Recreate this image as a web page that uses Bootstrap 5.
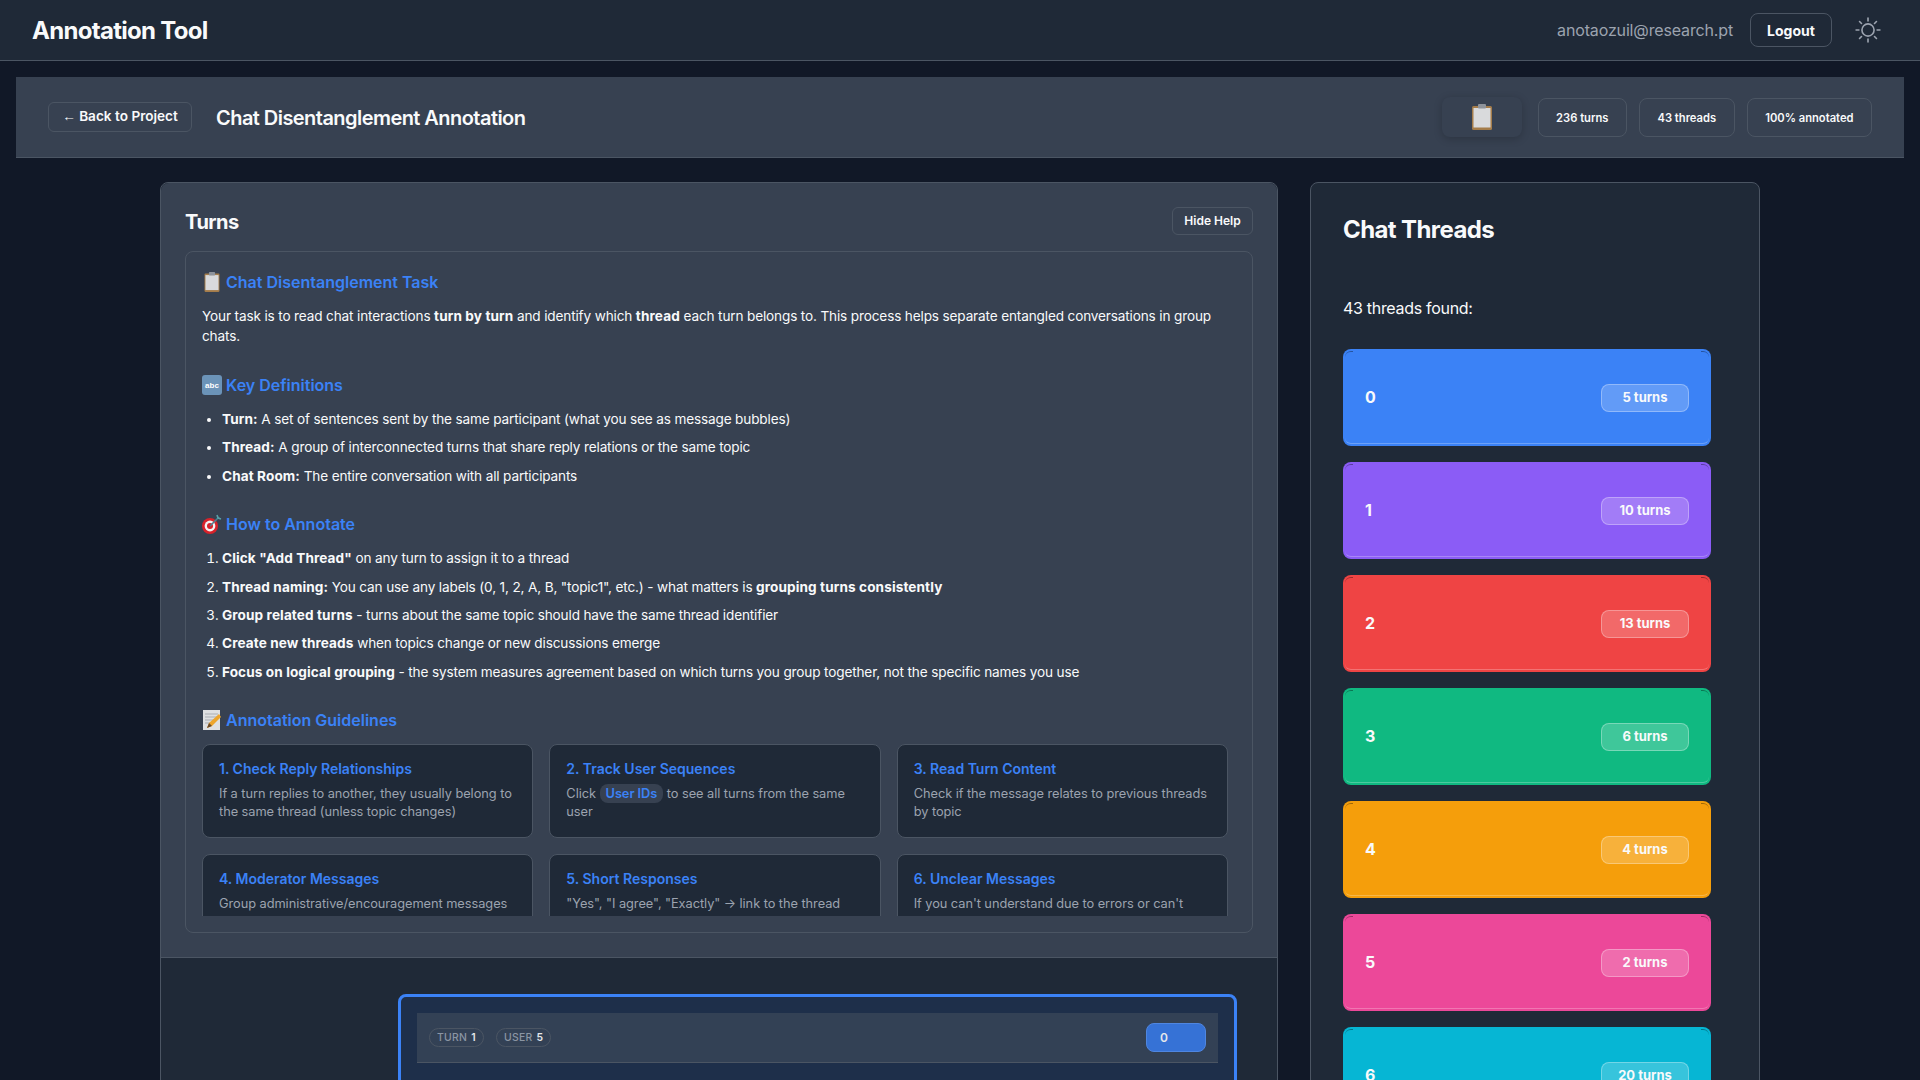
<!DOCTYPE html>
<html lang="en">
<head>
    <meta charset="UTF-8">
    <meta name="viewport" content="width=device-width, initial-scale=1.0">
    <title>Annotation Tool</title>
    <link href="https://cdn.jsdelivr.net/npm/bootstrap@5.3.0/dist/css/bootstrap.min.css" rel="stylesheet">
    <style>
        html, body {
            height: 100vh;
            overflow: hidden;
        }

        body {
            background: #111827;
            color: #f9fafb;
            font-family: Inter, "Liberation Sans", sans-serif;
        }

        .top-bar {
            height: 61px;
            padding: 0 32px;
            background: #1f2937;
            border-bottom: 1px solid #4b5563;
        }

        .brand-name {
            font-size: 24px;
            font-weight: 700;
            letter-spacing: -0.7px;
            padding-top: 2px;
        }

        .user-mail {
            color: #9ca3af;
            font-size: 16px;
            letter-spacing: -0.15px;
            margin-right: 17px;
        }

        .outline-btn {
            background: transparent;
            border: 1px solid #4b5563;
            color: #f9fafb;
            font-weight: 600;
            border-radius: 6px;
        }

        .logout-btn {
            width: 82px;
            height: 34px;
            font-size: 14px;
            font-weight: 700;
            border-radius: 8px;
        }

        .sun-btn {
            width: 36px;
            height: 36px;
            margin-left: 18px;
            margin-right: 2px;
            color: #9ca3af;
        }

        .project-bar {
            height: 81px;
            margin: 16px 16px 24px;
            padding: 0 32px;
            background: #374151;
            border-bottom: 1px solid #4b5563;
        }

        .back-btn {
            width: 144px;
            height: 30px;
            font-size: 13.6px;
            margin-right: 24px;
            white-space: nowrap;
        }

        .back-arrow {
            font-family: "Liberation Sans", sans-serif;
            font-weight: 400;
        }

        .project-title {
            font-size: 20px;
            font-weight: 600;
            letter-spacing: -0.55px;
            margin: 2px 0 0;
        }

        .emoji-box {
            width: 80px;
            height: 40px;
            background: #374151;
            border-radius: 8px;
            box-shadow: 0 2px 8px rgba(0, 0, 0, .2);
            margin-right: 4px;
        }

        .stat-pill {
            height: 39px;
            padding: 2px 17.5px 0;
            border: 1px solid #4b5563;
            border-radius: 8px;
            font-size: 11.2px;
            font-weight: 600;
        }

        .work-area {
            width: 1600px;
            margin: 0 auto;
            display: grid;
            grid-template-columns: 1118px 450px;
            gap: 32px;
            align-items: start;
        }

        .turns-panel {
            background: #1f2937;
            border: 1px solid #4b5563;
            border-radius: 8px;
        }

        .turns-top {
            background: #374151;
            border-bottom: 1px solid #4b5563;
            border-radius: 8px 8px 0 0;
            padding: 24px;
        }

        .turns-title {
            font-size: 20px;
            font-weight: 700;
            letter-spacing: -0.5px;
            margin: 2px 0 0;
        }

        .help-btn {
            width: 81px;
            height: 28px;
            font-size: 12px;
        }

        .help-box {
            height: 682px;
            margin-top: 16px;
            padding: 16px;
            border: 1px solid #4b5563;
            border-radius: 8px;
        }

        .help-scroll {
            height: 100%;
            overflow: hidden;
            padding: 2px 8px 0 0;
        }

        .help-heading {
            font-size: 16px;
            font-weight: 600;
            color: #3b82f6;
            line-height: 24px;
            margin: 0 0 12px;
        }

        .help-text {
            font-size: 13.6px;
            letter-spacing: -0.15px;
            line-height: 20px;
            margin: 0 0 27px;
        }

        .help-list {
            font-size: 13.6px;
            letter-spacing: -0.15px;
            line-height: 20.4px;
            padding-left: 20px;
            margin: 0 0 26px;
        }

        .help-text strong,
        .help-list strong {
            letter-spacing: .1px;
        }

        .help-list li {
            margin-bottom: 8px;
        }

        .guide-grid {
            display: grid;
            grid-template-columns: repeat(3, 1fr);
            gap: 16px;
        }

        .guide-card {
            height: 94px;
            padding: 14px 16px 12px;
            background: #1f2937;
            border: 1px solid #4b5563;
            border-radius: 8px;
        }

        .guide-title {
            font-size: 14px;
            font-weight: 600;
            color: #3b82f6;
            line-height: 20px;
            margin: 0 0 6px;
        }

        .guide-text {
            font-size: 12.8px;
            letter-spacing: -0.05px;
            line-height: 18px;
            color: #9ca3af;
            margin: 0;
        }

        .uid-chip {
            background: #374151;
            color: #3b82f6;
            font-weight: 600;
            padding: 2px 6px;
            border-radius: 8px;
        }

        .turns-list {
            padding: 36px 40px 0 237px;
        }

        .turn-card {
            height: 200px;
            padding: 16px;
            background: #1e2f4a;
            border: 3px solid #3b82f6;
            border-radius: 8px;
        }

        .turn-head {
            height: 50px;
            padding: 0 12px;
            background: #334155;
            border-bottom: 1px solid #4b5563;
        }

        .turn-pill {
            height: 19px;
            padding: 0 7px;
            border: 1px solid #4b5563;
            border-radius: 10px;
            font-size: 10.4px;
            font-weight: 500;
            letter-spacing: .3px;
            color: #8b95a3;
        }

        .turn-pill b {
            color: #e5e7eb;
            margin-left: 4px;
            font-weight: 600;
        }

        .thread-btn {
            width: 60px;
            height: 29px;
            padding: 0 0 0 13px;
            background: #3672d6;
            border: 1px solid #4f86e0;
            border-radius: 8px;
            color: #e5e7eb;
            font-size: 12px;
            font-weight: 600;
            text-align: left;
        }

        .threads-panel {
            background: #1f2937;
            border: 1px solid #4b5563;
            border-radius: 8px;
            padding: 32px 48px 24px 32px;
        }

        .threads-title {
            font-size: 24px;
            font-weight: 700;
            letter-spacing: -0.6px;
            line-height: 29px;
            margin: 0 0 52px;
        }

        .threads-count {
            font-size: 16px;
            letter-spacing: -0.3px;
            line-height: 24px;
            margin: 0 0 29px;
        }

        .thread-item {
            position: relative;
            height: 97px;
            margin-bottom: 16px;
            padding: 0 22px;
            border-radius: 8px;
            font-weight: 700;
        }

        .thread-item::after {
            content: "";
            position: absolute;
            inset: 2px;
            border-radius: 6px;
            border-top: 1px solid rgba(0, 0, 0, .35);
            border-bottom: 1px solid rgba(255, 255, 255, .25);
            clip-path: polygon(0 0, 8px 0, 8px 8px, calc(100% - 8px) 8px, calc(100% - 8px) 0, 100% 0, 100% 100%, 0 100%);
        }

        .thread-num {
            padding-bottom: 2px;
        }

        .turn-count {
            width: 88px;
            height: 28px;
            background: rgba(255, 255, 255, .2);
            border: 1px solid rgba(255, 255, 255, .3);
            border-radius: 8px;
            font-size: 13px;
            font-weight: 700;
        }

        .t-blue { background: #3b82f6; }
        .t-purple { background: #8b5cf6; }
        .t-red { background: #ef4444; }
        .t-green { background: #10b981; }
        .t-amber { background: #f59e0b; }
        .t-pink { background: #ec4899; }
        .t-cyan { background: #06b6d4; }
    </style>
</head>
<body>
<nav class="top-bar d-flex align-items-center justify-content-between">
    <span class="brand-name">Annotation Tool</span>
    <div class="d-flex align-items-center">
        <span class="user-mail">anotaozuil@research.pt</span>
        <button class="outline-btn logout-btn p-0">Logout</button>
        <span class="sun-btn d-flex align-items-center justify-content-center">
            <svg width="26" height="26" viewBox="0 0 24 24" fill="none" stroke="currentColor" stroke-width="1.5" stroke-linecap="round">
                <circle cx="12" cy="12" r="5.6"/>
                <path d="M12 1v2.6M12 20.4V23M1 12h2.6M20.4 12H23M4.2 4.2l1.8 1.8M18 18l1.8 1.8M4.2 19.8L6 18M18 6l1.8-1.8"/>
            </svg>
        </span>
    </div>
</nav>

<section class="project-bar d-flex align-items-center justify-content-between">
    <div class="d-flex align-items-center">
        <button class="outline-btn back-btn p-0"><span class="back-arrow">←</span> Back to Project</button>
        <h1 class="project-title">Chat Disentanglement Annotation</h1>
    </div>
    <div class="d-flex align-items-center gap-2">
        <span class="emoji-box d-flex align-items-center justify-content-center">
            <svg width="20" height="26" viewBox="0 0 20 26"><use href="#clipboard"/></svg>
        </span>
        <span class="stat-pill d-flex align-items-center ms-1">236 turns</span>
        <span class="stat-pill d-flex align-items-center ms-1">43 threads</span>
        <span class="stat-pill d-flex align-items-center ms-1">100% annotated</span>
    </div>
</section>

<svg width="0" height="0" class="d-block position-absolute">
    <defs>
        <symbol id="clipboard" viewBox="0 0 20 26">
            <rect x="0" y="2" width="20" height="24" rx="1.5" fill="#a47c4a"/>
            <rect x="1.5" y="4" width="17" height="19.5" fill="#d9dadc"/>
            <rect x="6" y="0" width="8" height="4.5" rx="1" fill="#8e939b"/>
        </symbol>
    </defs>
</svg>

<main class="work-area">
    <div class="turns-panel">
        <div class="turns-top">
            <div class="d-flex align-items-center justify-content-between">
                <h2 class="turns-title">Turns</h2>
                <button class="outline-btn help-btn p-0">Hide Help</button>
            </div>
            <div class="help-box">
                <div class="help-scroll">
                    <h3 class="help-heading">
                        <svg width="20" height="20" viewBox="0 0 20 26" class="align-text-bottom"><use href="#clipboard"/></svg>
                        Chat Disentanglement Task
                    </h3>
                    <p class="help-text">Your task is to read chat interactions <strong>turn by turn</strong> and identify which <strong>thread</strong> each turn belongs to. This process helps separate entangled conversations in group chats.</p>

                    <h3 class="help-heading">
                        <svg width="20" height="20" viewBox="0 0 20 20" class="align-text-bottom">
                            <rect width="20" height="20" rx="3" fill="#6b93b8"/>
                            <text x="10" y="13" font-size="8" fill="#fff" text-anchor="middle" font-family="Liberation Sans">abc</text>
                        </svg>
                        Key Definitions
                    </h3>
                    <ul class="help-list">
                        <li><strong>Turn:</strong> A set of sentences sent by the same participant (what you see as message bubbles)</li>
                        <li><strong>Thread:</strong> A group of interconnected turns that share reply relations or the same topic</li>
                        <li><strong>Chat Room:</strong> The entire conversation with all participants</li>
                    </ul>

                    <h3 class="help-heading">
                        <svg width="20" height="20" viewBox="0 0 20 20" class="align-text-bottom">
                            <circle cx="8" cy="12" r="8" fill="#d8222a"/>
                            <circle cx="8" cy="12" r="5.4" fill="#f3f3f3"/>
                            <circle cx="8" cy="12" r="3" fill="#d8222a"/>
                            <path d="M8 12 17 3" stroke="#4f7f8f" stroke-width="1.6"/>
                            <path d="M15 1l1 3 3 1" stroke="#58a0a8" stroke-width="1.6" fill="none"/>
                        </svg>
                        How to Annotate
                    </h3>
                    <ol class="help-list">
                        <li><strong>Click "Add Thread"</strong> on any turn to assign it to a thread</li>
                        <li><strong>Thread naming:</strong> You can use any labels (0, 1, 2, A, B, "topic1", etc.) - what matters is <strong>grouping turns consistently</strong></li>
                        <li><strong>Group related turns</strong> - turns about the same topic should have the same thread identifier</li>
                        <li><strong>Create new threads</strong> when topics change or new discussions emerge</li>
                        <li><strong>Focus on logical grouping</strong> - the system measures agreement based on which turns you group together, not the specific names you use</li>
                    </ol>

                    <h3 class="help-heading">
                        <svg width="20" height="20" viewBox="0 0 20 20" class="align-text-bottom">
                            <rect x="1" y="0" width="17" height="20" fill="#dfe0e2"/>
                            <path d="M3 4h13M3 7h13M3 10h9M3 13h6" stroke="#a9adb3"/>
                            <path d="M5 18l2-5 10-9 2 3-9 9z" fill="#eda52c"/>
                            <path d="M5 18l2-5 3 3z" fill="#6b4a2a"/>
                        </svg>
                        Annotation Guidelines
                    </h3>
                    <div class="guide-grid">
                        <div class="guide-card">
                            <h4 class="guide-title">1. Check Reply Relationships</h4>
                            <p class="guide-text">If a turn replies to another, they usually belong to the same thread (unless topic changes)</p>
                        </div>
                        <div class="guide-card">
                            <h4 class="guide-title">2. Track User Sequences</h4>
                            <p class="guide-text">Click <span class="uid-chip">User IDs</span> to see all turns from the same user</p>
                        </div>
                        <div class="guide-card">
                            <h4 class="guide-title">3. Read Turn Content</h4>
                            <p class="guide-text">Check if the message relates to previous threads by topic</p>
                        </div>
                        <div class="guide-card">
                            <h4 class="guide-title">4. Moderator Messages</h4>
                            <p class="guide-text">Group administrative/encouragement messages</p>
                        </div>
                        <div class="guide-card">
                            <h4 class="guide-title">5. Short Responses</h4>
                            <p class="guide-text">"Yes", "I agree", "Exactly" → link to the thread</p>
                        </div>
                        <div class="guide-card">
                            <h4 class="guide-title">6. Unclear Messages</h4>
                            <p class="guide-text">If you can't understand due to errors or can't</p>
                        </div>
                    </div>
                </div>
            </div>
        </div>
        <div class="turns-list">
            <div class="turn-card">
                <div class="turn-head d-flex align-items-center justify-content-between">
                    <div class="d-flex gap-2">
                        <span class="turn-pill d-flex align-items-center">TURN <b>1</b></span>
                        <span class="turn-pill d-flex align-items-center ms-1">USER <b>5</b></span>
                    </div>
                    <button class="thread-btn">0</button>
                </div>
            </div>
        </div>
    </div>

    <aside class="threads-panel">
        <h2 class="threads-title">Chat Threads</h2>
        <p class="threads-count">43 threads found:</p>
        <div class="thread-item t-blue d-flex align-items-center justify-content-between"><span class="thread-num">0</span><span class="turn-count d-flex align-items-center justify-content-center">5 turns</span></div>
        <div class="thread-item t-purple d-flex align-items-center justify-content-between"><span class="thread-num">1</span><span class="turn-count d-flex align-items-center justify-content-center">10 turns</span></div>
        <div class="thread-item t-red d-flex align-items-center justify-content-between"><span class="thread-num">2</span><span class="turn-count d-flex align-items-center justify-content-center">13 turns</span></div>
        <div class="thread-item t-green d-flex align-items-center justify-content-between"><span class="thread-num">3</span><span class="turn-count d-flex align-items-center justify-content-center">6 turns</span></div>
        <div class="thread-item t-amber d-flex align-items-center justify-content-between"><span class="thread-num">4</span><span class="turn-count d-flex align-items-center justify-content-center">4 turns</span></div>
        <div class="thread-item t-pink d-flex align-items-center justify-content-between"><span class="thread-num">5</span><span class="turn-count d-flex align-items-center justify-content-center">2 turns</span></div>
        <div class="thread-item t-cyan d-flex align-items-center justify-content-between"><span class="thread-num">6</span><span class="turn-count d-flex align-items-center justify-content-center">20 turns</span></div>
    </aside>
</main>

<script src="https://cdn.jsdelivr.net/npm/bootstrap@5.3.0/dist/js/bootstrap.bundle.min.js"></script>
</body>
</html>
